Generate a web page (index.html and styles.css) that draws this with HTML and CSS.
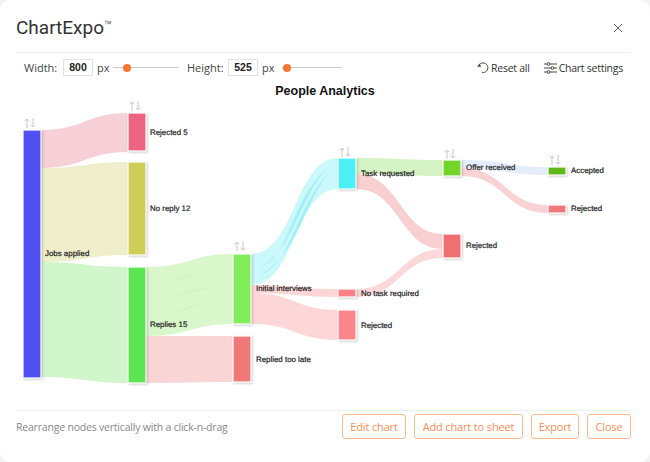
FILE: index.html
```html
<!DOCTYPE html>
<html lang="en">
<head>
<meta charset="utf-8">
<title>ChartExpo</title>
<link rel="stylesheet" href="styles.css">
</head>
<body>
<div class="modal">
  <header class="head">
    <h1 class="brand">ChartExpo<span class="tm">™</span></h1>
    <svg class="close" width="10" height="10" viewBox="0 0 10 10"><path d="M1 1 9 9M9 1 1 9"/></svg>
  </header>
  <div class="tools">
    <label class="lbl lbl-w">Width:</label>
    <span class="num">800</span>
    <span class="px">px</span>
    <div class="slider s1"><i class="thumb"></i></div>
    <label class="lbl lbl-h">Height:</label>
    <span class="num">525</span>
    <span class="px">px</span>
    <div class="slider s2"><i class="thumb"></i></div>
    <span class="act act-reset">
      <svg class="ico" width="12" height="13" viewBox="0 0 12 13"><path class="ln" d="M2.6 3.4A4.8 4.8 0 1 1 5 11.4"/><path class="fl" d="M0.2 5.8 4.2 5.8 2.4 2.6Z"/></svg>
      Reset all
    </span>
    <span class="act act-set">
      <svg class="ico" width="13" height="12" viewBox="0 0 13 12"><path class="ln" d="M0 2H3M6 2H13M0 6H7M10 6H13M0 10H3M6 10H13"/><circle class="ln" cx="4.5" cy="2" r="1.4"/><circle class="ln" cx="8.5" cy="6" r="1.4"/><circle class="ln" cx="4.5" cy="10" r="1.4"/></svg>
      Chart settings
    </span>
  </div>
  <svg class="chart" width="650" height="328" viewBox="0 82 650 328">
    <defs>
      <g id="sw">
        <path d="M3 10V1M.8 3.2 3 1 5.2 3.2M9 0V9M6.8 6.8 9 9 11.2 6.8"/>
      </g>
    </defs>
    <text class="title" x="325" y="95">People Analytics</text>

    <path fill="#f7cfd7" d="M41 130C85 130 85 113 128 113V152C85 152 85 168 41 168Z"/>
    <path fill="#eeeecb" d="M41 168C85 168 85 162 128 162V255C85 255 85 262 41 262Z"/>
    <path fill="#d2f6cc" d="M41 262C85 262 85 267 128 267V383C85 383 85 377 41 377Z"/>
    <path fill="#daf7cc" d="M146 267C190 267 190 254 233 254V324C190 324 190 336 146 336Z"/>
    <path fill="#fad5d6" d="M146 336C190 336 190 336 233 336V382C190 382 190 383 146 383Z"/>
    <path fill="#cbf8fb" d="M251 254C295 254 295 158 338 158V189C295 189 295 285 251 285Z"/>
    <path fill="#fcd6d7" d="M251 285C295 285 295 289 338 289V297C295 297 295 293 251 293Z"/>
    <path fill="#fdd7d8" d="M251 293C295 293 295 310 338 310V340C295 340 295 324 251 324Z"/>
    <path fill="#d5f3c4" d="M356 158C400 158 400 160 443 160V176C400 176 400 174 356 174Z"/>
    <path fill="#f8d0d1" d="M356 174C400 174 400 234 443 234V249C400 249 400 189 356 189Z"/>
    <path fill="#fbd8d9" d="M356 289C400 289 400 249 443 249V258C400 258 400 297 356 297Z"/>
    <path fill="#e4edf9" d="M461 160C505 160 505 167 548 167V175C505 175 505 168 461 168Z"/>
    <path fill="#f9d3d4" d="M461 168C505 168 505 205 548 205V213C505 213 505 176 461 176Z"/>

    <path fill="#a4eff6" d="M258 268C292 258 290 195 331 166C300 190 296 250 258 268ZM258 276C294 264 294 205 332 170C304 198 300 255 258 276Z"/>
    <path fill="#cdf3bd" d="M165 283C180 278 192 275 206 271C192 276 180 280 165 283ZM172 296C186 292 200 289 216 285C200 291 186 294 172 296ZM165 316C182 309 198 304 216 297C198 305 182 311 165 316Z"/>

    <g class="node">
      <rect fill="#5050f0" x="23" y="130" width="18" height="248"/>
      <rect fill="#ec6480" x="128" y="113" width="18" height="38"/>
      <rect fill="#cfcd55" x="128" y="162" width="18" height="93"/>
      <rect fill="#5be550" x="128" y="267" width="18" height="116"/>
      <rect fill="#82ed5a" x="233" y="254" width="18" height="70"/>
      <rect fill="#f07878" x="233" y="336" width="18" height="46"/>
      <rect fill="#4bf0f5" x="338" y="158" width="18" height="31"/>
      <rect fill="#fb8087" x="338" y="289" width="18" height="8"/>
      <rect fill="#fd8589" x="338" y="310" width="18" height="30"/>
      <rect fill="#72d52a" x="443" y="160" width="18" height="16"/>
      <rect fill="#ef7070" x="443" y="234" width="18" height="24"/>
      <rect fill="#5fb815" x="548" y="167" width="18" height="8"/>
      <rect fill="#f17878" x="548" y="205" width="18" height="8"/>
    </g>

    <g class="swap">
      <use href="#sw" x="24" y="118"/>
      <use href="#sw" x="129" y="101"/>
      <use href="#sw" x="234" y="241"/>
      <use href="#sw" x="339" y="147"/>
      <use href="#sw" x="444" y="149"/>
      <use href="#sw" x="549" y="155"/>
    </g>

    <g class="lab">
      <text x="45" y="256">Jobs applied</text>
      <text x="150" y="135">Rejected 5</text>
      <text x="150" y="211">No reply 12</text>
      <text x="150" y="327">Replies 15</text>
      <text x="256" y="291">Initial interviews</text>
      <text x="256" y="362">Replied too late</text>
      <text x="361" y="176">Task requested</text>
      <text x="361" y="296">No task required</text>
      <text x="361" y="328">Rejected</text>
      <text x="466" y="170">Offer received</text>
      <text x="466" y="248">Rejected</text>
      <text x="571" y="173">Accepted</text>
      <text x="571" y="211">Rejected</text>
    </g>
  </svg>
  <footer class="foot">
    <span class="hint">Rearrange nodes vertically with a click-n-drag</span>
    <div class="btns">
      <button class="btn b-edit">Edit chart</button>
      <button class="btn b-add">Add chart to sheet</button>
      <button class="btn b-exp">Export</button>
      <button class="btn b-close">Close</button>
    </div>
  </footer>
</div>
</body>
</html>
```
FILE: styles.css
```css
html, body {
  margin: 0;
  padding: 0;
  background: #f2f2f2;
}
.modal {
  width: 650px;
  height: 462px;
  box-sizing: border-box;
  background: #fff;
  border-radius: 10px;
  display: flex;
  flex-direction: column;
  font-family: "Open Sans", sans-serif;
  overflow: hidden;
}
.head {
  height: 53px;
  box-sizing: border-box;
  margin: 0 19px 0 16px;
  border-bottom: 1.5px solid #f0f0f0;
  display: flex;
  align-items: center;
  justify-content: space-between;
  padding: 4px 8px 0 0;
}
.brand {
  margin: 0;
  font-family: Roboto, sans-serif;
  font-weight: 400;
  font-size: 19px;
  color: #333;
  line-height: 24px;
}
.tm {
  font-size: 13px;
  line-height: 0;
  vertical-align: 4px;
  color: #666;
}
.close path {
  stroke: #666;
  stroke-width: 1;
  fill: none;
}
.tools {
  height: 29px;
  display: flex;
  align-items: center;
  padding: 0 27px 0 24px;
  font-size: 11px;
  color: #444;
}
.lbl-w { width: 39px; }
.lbl-h { width: 41px; }
.num {
  width: 30px;
  height: 17px;
  box-sizing: border-box;
  border: 1px solid #e2e2e2;
  font-family: "Liberation Sans", sans-serif;
  font-weight: 700;
  font-size: 10.5px;
  line-height: 15px;
  text-align: center;
  color: #222;
}
.px { margin: 0 5px 0 4px; width: 11px; }
.slider {
  height: 9px;
  display: flex;
  align-items: center;
  background: linear-gradient(#ccc, #ccc) center / 100% 1px no-repeat;
}
.s1 { width: 65px; margin-right: 9px; }
.s2 { width: 60px; margin-left: 4px; }
.thumb {
  display: block;
  width: 8px;
  height: 8px;
  border-radius: 50%;
  background: #f8762f;
}
.s1 .thumb { margin-left: 10px; }
.s2 .thumb { margin-left: 1px; }
.act {
  display: flex;
  align-items: center;
  gap: 2px;
  color: #333;
  font-size: 10.5px;
  letter-spacing: -0.25px;
}
.act-reset { margin-left: auto; }
.act-set { margin-left: 14px; }
.ico .ln { fill: none; stroke: #444; stroke-width: 1; }
.ico .fl { fill: #444; }
.chart {
  display: block;
  flex: none;
}
.title {
  font-family: "Liberation Sans", sans-serif;
  font-weight: 700;
  font-size: 12.5px;
  text-anchor: middle;
  fill: #111;
}
.node rect {
  stroke: #fff;
  stroke-width: 1.2;
  filter: drop-shadow(1px 1px 1px rgba(0, 0, 0, 0.2));
}
.swap {
  fill: none;
  stroke: #c8c8c8;
  stroke-width: 1;
}
.lab text {
  font-family: "Liberation Sans", sans-serif;
  font-size: 7.9px;
  text-rendering: geometricPrecision;
  fill: #222;
  stroke: #222;
  stroke-width: 0.2;
}
.foot {
  margin: 0 19px 0 16px;
  border-top: 1.5px solid #f0f0f0;
  padding-top: 3px;
  display: flex;
  align-items: flex-start;
  justify-content: space-between;
}
.hint {
  font-size: 10.5px;
  letter-spacing: -0.2px;
  color: #888;
  line-height: 26px;
}
.btns {
  display: flex;
  gap: 8px;
}
.btn {
  height: 25px;
  padding: 0;
  box-sizing: border-box;
  background: #fff;
  border: 1.5px solid #fdba8f;
  border-radius: 3px;
  font-family: "Open Sans", sans-serif;
  font-size: 11px;
  letter-spacing: -0.15px;
  color: #f98f57;
}
.b-edit { width: 64px; }
.b-add { width: 109px; }
.b-exp { width: 48px; }
.b-close { width: 44px; }
```
